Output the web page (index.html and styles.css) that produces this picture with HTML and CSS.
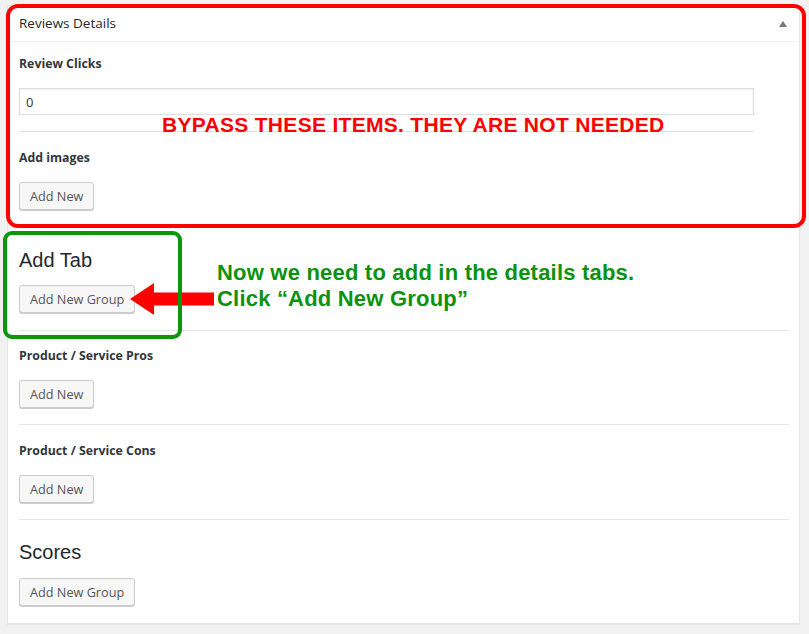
FILE: index.html
```html
<!DOCTYPE html>
<html lang="en">
<head>
    <meta charset="UTF-8">
    <title>Reviews Details</title>
    <link rel="stylesheet" href="styles.css">
</head>
<body>
    <div class="screen">
        <!-- Meta box -->
        <div class="postbox">
            <div class="postbox-head">
                <h2>Reviews Details</h2>
                <span class="toggle"></span>
            </div>
            <div class="inside">
                <div class="legacy">
                    <p class="field-label first">Review Clicks</p>
                    <input class="text-input" type="text" value="0">
                    <hr class="sep">
                    <p class="field-label">Add images</p>
                    <button class="btn">Add New</button>
                </div>

                <div class="tab-group">
                    <h3 class="group-title">Add Tab</h3>
                    <button class="btn">Add New Group</button>
                </div>

                <div class="field">
                    <p class="field-label">Product / Service Pros</p>
                    <button class="btn">Add New</button>
                </div>

                <div class="field">
                    <p class="field-label">Product / Service Cons</p>
                    <button class="btn">Add New</button>
                </div>

                <div class="scores">
                    <h3 class="group-title">Scores</h3>
                    <button class="btn">Add New Group</button>
                </div>
            </div>
        </div>

        <!-- Annotations drawn on top of the screenshot -->
        <div class="mark mark-red"></div>
        <p class="note note-red">BYPASS THESE ITEMS. THEY ARE NOT NEEDED</p>

        <svg class="arrow" width="84" height="32" viewBox="0 0 84 32">
            <polygon points="0,16 24,0 24,9.5 84,9.5 84,22.5 24,22.5 24,32" fill="#ff0000"/>
        </svg>
        <div class="mark mark-green"></div>
        <p class="note note-green">Now we need to add in the details tabs.<br>Click “Add New Group”</p>
    </div>
</body>
</html>
```

FILE: styles.css
```css
body {
    margin: 0;
    background-color: #f1f1f1;
    font-family: "Open Sans", "Noto Sans", sans-serif;
    color: #23282d;
}
.screen {
    position: relative;
    height: 634px;
    overflow: hidden;
}
.postbox {
    margin: 5px 9px 0 7px;
    background-color: #fff;
    border: 1px solid #e5e5e5;
    box-shadow: 0 1px 1px rgba(0, 0, 0, 0.04);
}
.postbox-head {
    display: flex;
    align-items: center;
    justify-content: space-between;
    height: 35px;
    padding: 0 12px 0 11px;
    border-bottom: 1px solid #eee;
}
.postbox-head h2 {
    margin: 0;
    font-size: 13.5px;
    font-weight: 400;
    line-height: 35px;
}
.toggle {
    width: 0;
    height: 0;
    border-left: 4px solid transparent;
    border-right: 4px solid transparent;
    border-bottom: 6px solid #72777c;
}
.inside {
    padding: 0 10px 17px 11px;
}
.legacy {
    width: 735px;
}
.field-label {
    margin: 17px 0 15px;
    font-size: 12.3px;
    font-weight: 700;
    line-height: 18px;
    color: #32373c;
}
.field-label.first {
    margin-top: 13px;
}
.text-input {
    display: block;
    box-sizing: border-box;
    width: 100%;
    height: 27px;
    padding: 0 6px;
    border: 1px solid #ddd;
    box-shadow: inset 0 1px 2px rgba(0, 0, 0, 0.07);
    font-family: inherit;
    font-size: 13px;
    color: #32373c;
}
.sep {
    margin: 16px 0 0;
    border: none;
    border-top: 1px solid #e1e1e1;
}
.btn {
    display: block;
    height: 28px;
    padding: 0 10px;
    background-color: #f7f7f7;
    border: 1px solid #ccc;
    border-radius: 3px;
    box-shadow: 0 1px 0 #ccc;
    font-family: inherit;
    font-size: 12.7px;
    line-height: 26px;
    color: #555;
}
.group-title {
    margin: 0 0 13px;
    font-family: "Liberation Sans", Arial, sans-serif;
    font-size: 20px;
    font-weight: 400;
    line-height: 24px;
}
.tab-group {
    padding: 38px 0 17px;
    border-bottom: 1px solid #e5e5e5;
}
.field {
    padding: 16px 0;
    border-bottom: 1px solid #e5e5e5;
}
.field + .field {
    padding-top: 17px;
}
.field .field-label {
    margin-top: 0;
}
.scores {
    padding-top: 20px;
}
.scores .group-title {
    margin-bottom: 14px;
}

/* annotations */
.mark {
    position: absolute;
    box-sizing: border-box;
}
.mark-red {
    left: 6px;
    top: 4px;
    width: 800px;
    height: 224px;
    border: 4px solid #ff0000;
    border-radius: 12px;
}
.mark-green {
    left: 3px;
    top: 231px;
    width: 179px;
    height: 108px;
    border: 4px solid #0c960c;
    border-radius: 9px;
}
.note {
    position: absolute;
    margin: 0;
    font-family: "Liberation Sans", Arial, sans-serif;
    font-weight: 700;
}
.note-red {
    left: 162px;
    top: 113px;
    font-size: 21px;
    letter-spacing: 0.3px;
    line-height: 24px;
    color: #ff0000;
}
.note-green {
    left: 217px;
    top: 260px;
    font-size: 22px;
    letter-spacing: 0.2px;
    line-height: 26px;
    color: #0c920c;
}
.arrow {
    position: absolute;
    left: 130px;
    top: 283px;
}
```
